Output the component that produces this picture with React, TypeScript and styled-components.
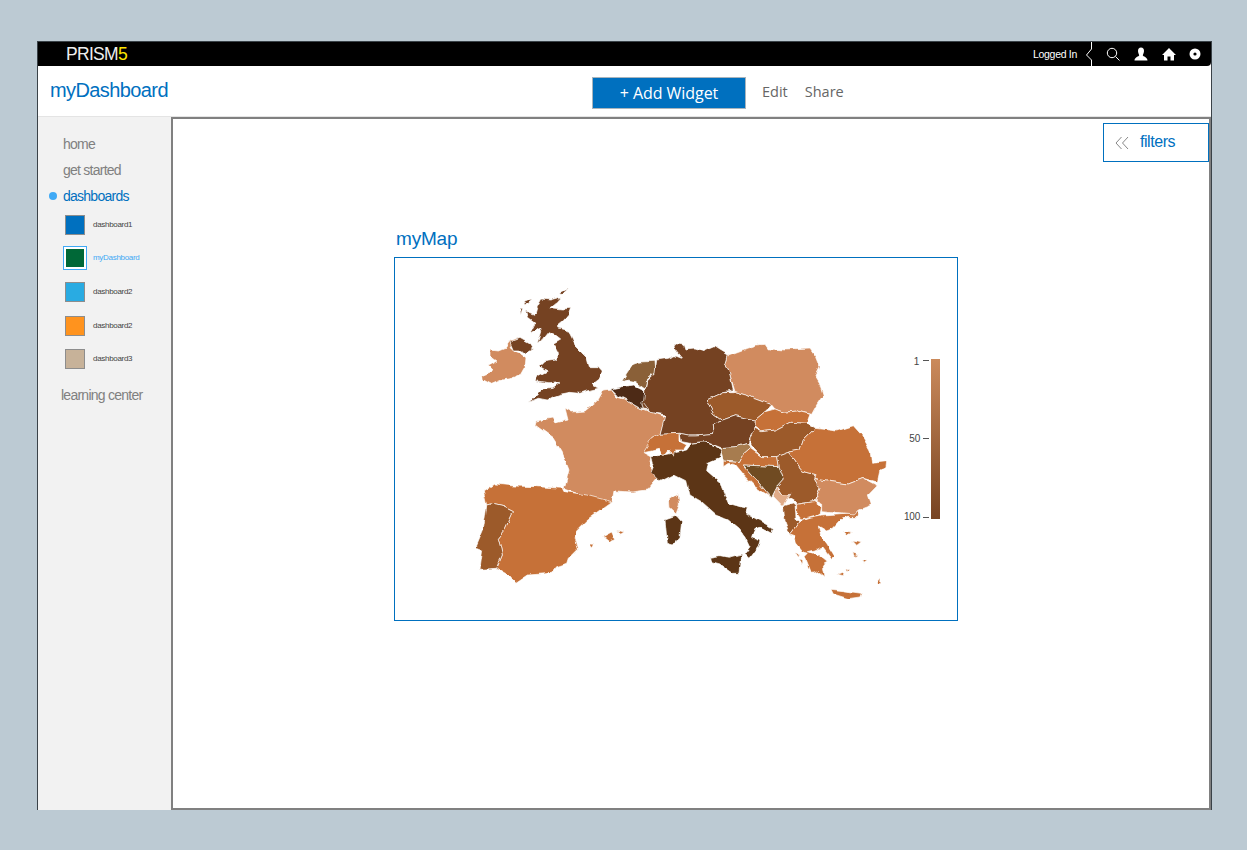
import { FC } from 'react'
import styled, { createGlobalStyle } from 'styled-components'

const GlobalStyle = createGlobalStyle`
  html, body { margin: 0; padding: 0; background: #bccad3; }
  body { font-family: 'Liberation Sans', Arial, sans-serif; }
`

const Page = styled.div`
  width: 1247px;
  height: 850px;
  padding: 41px 35px 0 37px;
  box-sizing: border-box;
`
const Frame = styled.div`
  width: 1175px;
  height: 769px;
  box-sizing: border-box;
  border: 1px solid #3a4248;
  border-bottom: 0;
  background: #fff;
  display: flex;
  flex-direction: column;
`
const TopBar = styled.div`
  height: 24px;
  flex: none;
  background: #000;
  border-bottom-right-radius: 4px;
  display: flex;
  align-items: center;
  padding-left: 28px;
`
const Logo = styled.div`
  font-size: 17.5px;
  letter-spacing: -0.7px;
  color: #eee;
  span { color: #ffe600; }
`
const TopRight = styled.div`
  margin-left: auto;
  display: flex;
  align-items: center;
  height: 24px;
`
const Logged = styled.span`
  font-size: 10.5px;
  letter-spacing: -0.3px;
  color: #fff;
  margin-right: 8px;
`
const Notch = styled.svg`
  width: 8px;
  height: 24px;
  display: block;
  margin-right: 13px;
`
const TopIcon = styled.svg`
  width: 14px;
  height: 14px;
  display: block;
  margin-right: 14px;
  &:last-child { margin: 0 9px 0 -2px; }
`
const Header = styled.div`
  height: 51px;
  flex: none;
  display: flex;
  align-items: center;
  box-sizing: border-box;
  border-bottom: 1px solid #e4e4e4;
`
const Brand = styled.div`
  width: 554px;
  box-sizing: border-box;
  padding: 0 0 1px 12px;
  font-size: 20px;
  letter-spacing: -0.6px;
  color: #0070bf;
`
const AddButton = styled.button`
  width: 154px;
  height: 32px;
  margin-top: 4px;
  padding: 0;
  border: 1px solid #a9b4bc;
  background: #0070bf;
  color: #fff;
  font-family: 'Open Sans', sans-serif;
  font-size: 16px;
  letter-spacing: -0.05px;
`
const HeadLink = styled.a`
  font-family: 'Open Sans', sans-serif;
  font-size: 14.5px;
  color: #666;
  margin-left: 16px;
  & + & { margin-left: 17px; }
`
const Body = styled.div`
  flex: 1;
  display: flex;
  min-height: 0;
`
const Side = styled.nav`
  width: 133px;
  flex: none;
  box-sizing: border-box;
  padding-top: 14px;
  background: #f2f2f2;
`
const NavItem = styled.div<{ $active?: boolean }>`
  position: relative;
  height: 26px;
  line-height: 26px;
  padding-left: 25px;
  font-size: 14px;
  letter-spacing: -0.75px;
  color: ${p => (p.$active ? '#0070bf' : '#808080')};
`
const Dot = styled.i`
  position: absolute;
  left: 11px;
  top: 9px;
  width: 8px;
  height: 8px;
  border-radius: 50%;
  background: #3fa9f5;
`
const Learning = styled(NavItem)`
  padding-left: 23px;
  margin-top: 6px;
`
const Thumbs = styled.div`
  display: flex;
  flex-direction: column;
  margin-top: -1px;
`
const ThumbRow = styled.div`
  height: 33.6px;
  display: flex;
  align-items: center;
  padding-left: 27px;
`
const Thumb = styled.div<{ $color: string; $selected?: boolean }>`
  width: 20px;
  height: 20px;
  flex: none;
  box-sizing: border-box;
  background: ${p => p.$color};
  border: 1px solid #8d8d8d;
  ${p => p.$selected && `
    outline: 1px solid #3fa9f5;
    outline-offset: 1px;
    border-color: #fff;
    box-shadow: 0 0 0 1px #fff;
  `}
`
const ThumbLabel = styled.span<{ $selected?: boolean }>`
  margin: -1px 0 0 8px;
  font-size: 8px;
  letter-spacing: -0.3px;
  color: ${p => (p.$selected ? '#3fa9f5' : '#444')};
`
const Main = styled.main`
  flex: 1;
  box-sizing: border-box;
  border: 2px solid #808080;
  padding-top: 4px;
  min-width: 0;
`
const FilterRow = styled.div`
  display: flex;
  justify-content: flex-end;
`
const FilterBox = styled.div`
  width: 106px;
  height: 39px;
  box-sizing: border-box;
  border: 1px solid #0070bf;
  display: flex;
  align-items: center;
  padding: 0 0 2px 11px;
  font-size: 16px;
  letter-spacing: -0.45px;
  color: #0070bf;
`
const Chevrons = styled.svg`
  width: 14px;
  height: 14px;
  margin: 2px 11px 0 0;
`
const Widget = styled.section`
  margin: 64px 0 0 221px;
  width: 564px;
`
const WidgetTitle = styled.h2`
  margin: 0 0 5px 2px;
  height: 26px;
  line-height: 26px;
  font-size: 19px;
  font-weight: 400;
  letter-spacing: -0.2px;
  color: #0070bf;
`
const MapBox = styled.div`
  width: 564px;
  height: 364px;
  box-sizing: border-box;
  border: 1px solid #0070bf;
  display: flex;
`
const MapSvg = styled.svg`
  width: 562px;
  height: 362px;
  display: block;
  path { stroke: #fff; stroke-width: 2; stroke-linejoin: round; }
  text { font-family: 'Liberation Sans', Arial, sans-serif; font-size: 10px; fill: #444; letter-spacing: -0.2px; }
`

const LIGHT = '#d18b5e'
const ORANGE = '#c67137'
const MID = '#9c5a2c'
const BROWN = '#744222'
const ITALY = '#5c3513'

type Shape = [string, string]

const frameA: Shape[] = [
  ['M60 195L85 198 105 190 120 168 145 158 120 185 135 198 150 205 168 218 165 250 155 268 125 280 95 285 65 298 40 285 38 272 72 258 55 240 78 228 60 215Z', LIGHT],
  ['M120 172L150 160 185 180 190 190 165 205 145 195 130 195Z', BROWN],
  ['M215 42L240 45 275 35 262 50 240 68 275 72 305 70 298 90 280 110 262 125 285 130 300 150 315 180 335 200 350 215 358 245 385 245 397 258 390 278 365 298 385 310 350 318 330 325 300 322 270 328 250 335 232 345 205 340 175 352 195 335 215 315 250 310 272 292 240 296 195 290 205 272 232 258 210 245 225 230 262 225 262 200 250 178 272 165 250 148 235 140 215 165 205 175 215 140 212 125 180 145 195 115 175 100 170 78 195 88 200 70Z', BROWN],
  ['M160 52L186 41 166 66Z', BROWN],
  ['M150 70L158 70 152 90Z', BROWN],
  ['M272 22L296 11 280 29Z', BROWN],
  ['M490 235L510 228 555 226 558 262 530 285 525 312 505 298 495 290 470 285 455 290 470 265Z', '#8a6038'],
  ['M422 312L455 305 490 300 520 315 535 345 525 372 510 368 470 345 440 330Z', '#4e2b15'],
  ['M515 356L535 345 540 375 520 372Z', BROWN],
]

const frameB: Shape[] = [
  ['M265 60L320 40 350 30 375 28 385 42 440 45 510 42 530 70 540 95 525 125 540 150 550 180 530 210 515 238 470 228 430 232 405 222 395 210 340 190 320 180 285 170 270 120 255 95Z', LIGHT],
  ['M100 25L130 30 135 45 165 42 190 50 225 35 240 45 265 60 255 95 270 120 280 165 255 170 200 195 220 235 248 255 220 270 222 295 170 300 145 300 120 295 60 298 75 240 30 232 10 205 15 165 20 140 45 115 50 75 85 70 105 62 125 70 105 45Z', BROWN],
  ['M200 195L255 170 285 170 320 180 340 190 395 210 375 230 345 255 285 242 248 255 220 235Z', MID],
  ['M345 255L375 230 405 222 430 232 470 228 510 238 500 265 450 262 405 285 365 290 345 275Z', ORANGE],
  ['M222 295L220 270 248 255 285 242 345 255 345 280 330 305 325 325 290 335 240 338 200 322 185 320 150 325 125 320 120 295 145 300 170 300Z', BROWN],
  ['M345 280L365 290 405 285 450 262 500 265 525 280 490 315 480 345 445 352 410 365 365 365 330 330 330 305Z', MID],
  ['M10 350L35 310 60 298 120 295 120 320 140 330 130 345 105 345 100 365 85 345 70 365 55 340 35 345Z', ORANGE],
  ['M240 338L290 335 325 325 330 340 305 362 295 380 250 375Z', '#a77c50'],
  ['M250 375L295 380 305 362 330 340 365 365 410 365 415 395 350 392 310 390 345 430 395 488 345 455 310 420 285 390 265 385 250 395Z', ORANGE],
  ['M310 390L350 392 415 395 430 435 412 455 395 488 345 430Z', '#6f4b22'],
  ['M410 365L445 352 465 375 485 405 525 415 522 430 540 460 522 497 470 505 455 495 430 480 412 455 430 435 415 395Z', MID],
  ['M412 455L430 480 452 478 430 515 398 482Z', '#e0ab88'],
  ['M525 280L590 288 640 272 665 300 690 345 695 385 740 380 738 398 720 405 712 442 670 430 625 447 540 435 522 430 525 415 485 405 465 375 445 352 480 345 490 315Z', ORANGE],
  ['M522 430L540 435 625 447 670 430 712 452 685 480 695 510 655 525 640 540 545 530 545 505 525 495 540 460Z', LIGHT],
  ['M470 505L522 497 545 515 540 540 485 555 470 535Z', ORANGE],
]

const frameC: Shape[] = [
  ['M40 65L75 42 130 48 200 50 280 55 285 65 350 75 425 95 390 120 350 150 320 180 315 200 325 235 295 265 290 280 260 290 245 310 175 315 138 340 120 318 80 295 97 255 85 205 105 180 130 125 100 110 70 103 50 108Z', ORANGE],
  ['M50 108L70 103 100 110 130 125 105 180 85 205 97 255 80 295 30 298 38 240 18 232 40 180Z', MID],
  ['M398 200L425 186 434 206 415 214Z', ORANGE],
  ['M443 181L462 186 452 193Z', ORANGE],
  ['M360 222L374 223 367 234Z', ORANGE],
]

const frameD: Shape[] = [
  ['M35 50L70 45 140 30 155 10 195 5 245 30 240 55 205 70 200 95 240 130 265 190 300 200 325 205 320 220 345 235 400 265 395 280 360 262 345 265 335 290 360 300 355 320 330 355 315 340 330 320 318 295 295 265 265 240 230 225 185 185 150 165 140 125 100 105 60 125 30 95 40 70Z', ITALY],
  ['M88 178L115 160 118 195 108 222 90 205Z', LIGHT],
  ['M75 240L110 228 125 245 120 290 100 315 82 310Z', ITALY],
  ['M212 352L240 347 265 352 305 342 300 400 280 400 240 372 215 365Z', ITALY],
  ['M430 200L465 190 468 235 480 245 450 285 435 245Z', MID],
  ['M480 245L510 235 545 228 590 225 625 222 655 212 650 232 620 232 600 240 580 262 560 270 535 255 542 285 560 310 585 350 575 358 545 320 525 330 505 335 535 345 565 370 550 378 555 410 535 395 515 400 495 350 505 340 490 335 470 310 465 290 450 285Z', ORANGE],
  ['M573 448L610 452 664 460 660 471 625 476 580 462Z', ORANGE],
  ['M638 303L664 308 652 318Z', ORANGE],
  ['M610 273L638 276 622 286Z', ORANGE],
  ['M708 434L723 413 722 434Z', ORANGE],
  ['M463 338L480 345 470 352Z', ORANGE],
  ['M478 360L492 364 486 374Z', ORANGE],
  ['M638 338L652 344 644 350Z', ORANGE],
  ['M593 403L612 396 610 407Z', ORANGE],
  ['M668 360L682 362 672 370Z', ORANGE],
  ['M620 390L632 388 628 398Z', ORANGE],
]

// France spans several crops, so it is in page pixels
const france = 'M603 391L611 390 617 397 627 400 640 408 645 410 665 417 660 434 643 452 652 457 650 467 658 477 647 490 632 492 614 491 612 502 600 501 587 497 575 493 564 489 569 470 562 452 553 438 535 425 536 421 552 418 555 423 568 420 565 408 572 412 585 411 598 400Z'

const Group: FC<{ x: number; y: number; shapes: Shape[] }> = ({ x, y, shapes }) => (
  <g transform={`translate(${x} ${y}) scale(0.3333)`}>
    {shapes.map(([d, fill]) => <path key={d} d={d} fill={fill} />)}
  </g>
)

const EuropeMap: FC = () => (
  <MapSvg viewBox="395 258 562 362">
    <defs>
      <linearGradient id="legend" x1="0" y1="0" x2="0" y2="1">
        <stop offset="0" stopColor="#cb8a5b" />
        <stop offset="1" stopColor="#774322" />
      </linearGradient>
      <filter id="coast" x="0" y="0" width="100%" height="100%">
        <feTurbulence type="fractalNoise" baseFrequency="0.09" numOctaves="3" seed="4" />
        <feDisplacementMap in="SourceGraphic" scale="5" xChannelSelector="R" yChannelSelector="G" />
      </filter>
    </defs>
    <g filter="url(#coast)">
      <path d={france} fill={LIGHT} style={{ strokeWidth: 0.7 }} />
      <Group x={470} y={470} shapes={frameC} />
      <Group x={470} y={285} shapes={frameA} />
      <Group x={640} y={440} shapes={frameD} />
      <Group x={640} y={335} shapes={frameB} />
    </g>
    <rect x="931" y="359" width="9" height="160" fill="url(#legend)" />
    <rect x="923" y="360" width="6" height="1" fill="#555" />
    <rect x="923" y="438" width="6" height="1" fill="#555" />
    <rect x="923" y="517" width="6" height="1" fill="#555" />
    <text x="919" y="365" textAnchor="end">1</text>
    <text x="920" y="442" textAnchor="end">50</text>
    <text x="920" y="520" textAnchor="end">100</text>
  </MapSvg>
)

const boards = [
  { name: 'dashboard1', color: '#0070bf' },
  { name: 'myDashboard', color: '#006837', selected: true },
  { name: 'dashboard2', color: '#29abe2' },
  { name: 'dashboard2', color: '#ff931e' },
  { name: 'dashboard3', color: '#c7b299' },
]

export default function App() {
  return (
    <Page>
      <GlobalStyle />
      <Frame>
        <TopBar>
          <Logo>PRISM<span>5</span></Logo>
          <TopRight>
            <Logged>Logged In</Logged>
            <Notch viewBox="0 0 8 24">
              <path d="M6.5 0V7L1.5 13 6.5 18V24" fill="none" stroke="#fff" />
            </Notch>
            <TopIcon viewBox="0 0 14 14">
              <circle cx="6" cy="6" r="4.7" fill="none" stroke="#fff" />
              <path d="M9.5 9.5L13.5 13.5" stroke="#fff" />
            </TopIcon>
            <TopIcon viewBox="0 0 14 14">
              <path d="M7 0.5C9 0.5 10 2 10 4 10 6 9 7.2 8.8 8.2 9 9.5 13.5 10 13.5 13.5H.5C.5 10 5 9.5 5.2 8.2 5 7.2 4 6 4 4 4 2 5 .5 7 .5Z" fill="#fff" />
            </TopIcon>
            <TopIcon viewBox="0 0 14 14">
              <path d="M7 1L14 8H12V13.5H8.5V9.5H5.5V13.5H2V8H0Z" fill="#fff" />
            </TopIcon>
            <TopIcon viewBox="0 0 14 14">
              <circle cx="7" cy="7" r="5.5" fill="#fff" />
              <circle cx="7" cy="7" r="1.6" fill="#000" />
            </TopIcon>
          </TopRight>
        </TopBar>
        <Header>
          <Brand>myDashboard</Brand>
          <AddButton>+ Add Widget</AddButton>
          <HeadLink>Edit</HeadLink>
          <HeadLink>Share</HeadLink>
        </Header>
        <Body>
          <Side>
            <NavItem>home</NavItem>
            <NavItem>get started</NavItem>
            <NavItem $active><Dot />dashboards</NavItem>
            <Thumbs>
              {boards.map((b, i) => (
                <ThumbRow key={i}>
                  <Thumb $color={b.color} $selected={b.selected} />
                  <ThumbLabel $selected={b.selected}>{b.name}</ThumbLabel>
                </ThumbRow>
              ))}
            </Thumbs>
            <Learning>learning center</Learning>
          </Side>
          <Main>
            <FilterRow>
              <FilterBox>
                <Chevrons viewBox="0 0 14 14">
                  <path d="M6.5 1L1 7 6.5 13M13 1L7.5 7 13 13" fill="none" stroke="#888" />
                </Chevrons>
                filters
              </FilterBox>
            </FilterRow>
            <Widget>
              <WidgetTitle>myMap</WidgetTitle>
              <MapBox><EuropeMap /></MapBox>
            </Widget>
          </Main>
        </Body>
      </Frame>
    </Page>
  )
}
